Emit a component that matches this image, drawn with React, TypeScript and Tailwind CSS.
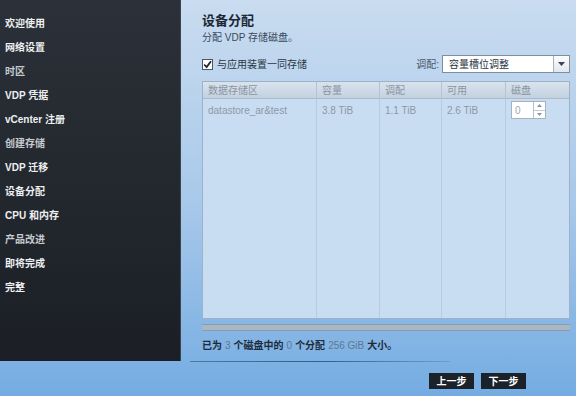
import React from "react";

const items: { t: string; dim?: boolean }[] = [
  { t: "欢迎使用" },
  { t: "网络设置" },
  { t: "时区", dim: true },
  { t: "VDP 凭据" },
  { t: "vCenter 注册" },
  { t: "创建存储", dim: true },
  { t: "VDP 迁移" },
  { t: "设备分配" },
  { t: "CPU 和内存" },
  { t: "产品改进", dim: true },
  { t: "即将完成" },
  { t: "完整" },
];

const font = { fontFamily: '"Liberation Sans", "Noto Sans CJK SC", sans-serif' };

export default function App() {
  return (
    <div
      className="w-[576px] h-[396px] flex flex-col bg-gradient-to-b from-[#c9dcf0] via-[#a9c9ea] to-[#74ace2] overflow-hidden"
      style={font}
    >
      <div className="flex h-[361px]">
        <div className="w-[181px] h-full bg-gradient-to-b from-[#2c3139] to-[#1b1f25] border-r border-[#3c4450] pt-[11px] pl-[5px] flex flex-col">
          {items.map((it) => (
            <div
              key={it.t}
              className={`h-[24px] flex items-center text-[10px] font-bold ${it.dim ? "text-[#c5cad0]" : "text-[#eef0f2]"}`}
            >
              {it.t}
            </div>
          ))}
        </div>
        <div className="flex-1 flex flex-col pl-[21px] pr-[6px] pt-[13px]">
          <div className="text-[13px] font-bold text-[#1b2735] leading-[16px]">设备分配</div>
          <div className="text-[10px] text-[#3a4a5c] leading-[14px] mt-[2px]">分配 VDP 存储磁盘。</div>
          <div className="flex items-center justify-between mt-[9px] h-[20px]">
            <div className="flex items-center">
              <div className="w-[11px] h-[11px] bg-white border border-[#4a5866] flex items-center justify-center">
                <svg width="9" height="9" viewBox="0 0 9 9">
                  <path d="M1.2 4.5 L3.6 7 L8 1.2" fill="none" stroke="#1a2430" strokeWidth="1.8" />
                </svg>
              </div>
              <span className="ml-[4px] text-[10px] text-[#2a3644]">与应用装置一同存储</span>
            </div>
            <div className="flex items-center">
              <span className="text-[10px] text-[#4a5a6c] mr-[3px]">调配:</span>
              <div className="w-[128px] h-[18px] bg-white border border-[#7f8e9c] flex">
                <div className="flex-1 text-[10px] text-[#2a3440] pl-[6px] flex items-center">容量槽位调整</div>
                <div className="w-[16px] border-l border-[#a5b1bd] bg-gradient-to-b from-[#fbfcfd] to-[#e3e8ee] flex items-center justify-center">
                  <svg width="7" height="4" viewBox="0 0 7 4">
                    <path d="M0 0 L7 0 L3.5 4 Z" fill="#3a4654" />
                  </svg>
                </div>
              </div>
            </div>
          </div>
          <div className="mt-[7px] h-[238px] border border-[#9db2c6] bg-[#c9ddf2] grid grid-cols-[114px_63px_62px_64px_1fr] grid-rows-[17px_22px_1fr] text-[10px]">
            {["数据存储区", "容量", "调配", "可用", "磁盘"].map((h, i) => (
              <div
                key={h}
                className={`bg-gradient-to-b from-[#d9e3ee] to-[#c3d1df] border-b border-[#a9bbcc] ${i < 4 ? "border-r border-r-[#b2c3d3]" : ""} pl-[5px] flex items-center text-[#8a95a1]`}
              >
                {h}
              </div>
            ))}
            {["datastore_ar&test", "3.8 TiB", "1.1 TiB", "2.6 TiB"].map((d) => (
              <div key={d} className="border-r border-[#b8cbde] pl-[5px] flex items-center text-[#8d98a4]">
                {d}
              </div>
            ))}
            <div className="flex items-center pl-[5px]">
              <div className="w-[35px] h-[18px] bg-white border border-[#a6b3bf] flex">
                <div className="flex-1 text-[10px] text-[#a0a8b0] pl-[3px] flex items-center">0</div>
                <div className="w-[12px] border-l border-[#b5c0ca] flex flex-col">
                  <div className="flex-1 flex items-center justify-center border-b border-[#c5ced6]">
                    <svg width="5" height="3" viewBox="0 0 5 3"><path d="M0 3 L5 3 L2.5 0 Z" fill="#8a96a2" /></svg>
                  </div>
                  <div className="flex-1 flex items-center justify-center">
                    <svg width="5" height="3" viewBox="0 0 5 3"><path d="M0 0 L5 0 L2.5 3 Z" fill="#8a96a2" /></svg>
                  </div>
                </div>
              </div>
            </div>
            {[0, 1, 2, 3, 4].map((i) => (
              <div key={i} className={i < 4 ? "border-r border-[#b8cbde]" : ""} />
            ))}
          </div>
          <div className="mt-[5px] h-[7px] bg-[#a9b7c4] border-t border-b border-[#8c9cab]" />
          <div className="mt-[7px] text-[10px] font-bold text-[#1e2b3a] flex items-center gap-[3px]">
            <span>已为</span>
            <span className="font-normal text-[#5f7890]">3</span>
            <span>个磁盘中的</span>
            <span className="font-normal text-[#5f7890]">0</span>
            <span>个分配</span>
            <span className="font-normal text-[#5f7890]">256 GiB</span>
            <span>大小。</span>
          </div>
        </div>
      </div>
      <div className="h-[1px] ml-[190px] w-[260px] bg-gradient-to-r from-[#4a7aa8] via-[#2e5f90] to-[#6a9fd4]" />
      <div className="flex justify-end gap-[7px] pr-[50px] mt-[11px]">
        <button className="w-[45px] h-[16px] bg-[#1c222a] text-white text-[10px] font-bold flex items-center justify-center">上一步</button>
        <button className="w-[45px] h-[16px] bg-[#1c222a] text-white text-[10px] font-bold flex items-center justify-center">下一步</button>
      </div>
    </div>
  );
}
